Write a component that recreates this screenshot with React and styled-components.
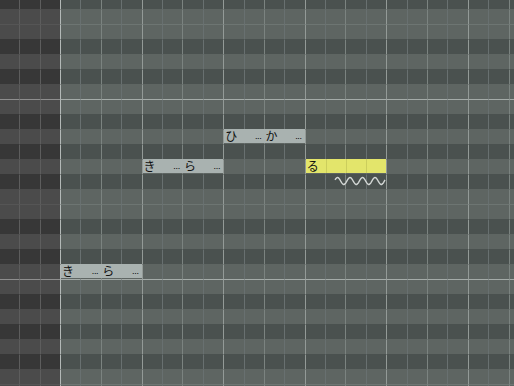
import React from 'react';
import styled, { createGlobalStyle } from 'styled-components';

// piano roll geometry
const COL = 20.4;   // one 16th column
const ROW = 15;     // one semitone row
const KEYS_W = 60;  // darkened area on the left
const TOP = -6;     // first row starts above the window
const ROW_COUNT = 27;
const COL_COUNT = 23;

const SCALE = ['F#', 'F', 'E', 'D#', 'D', 'C#', 'C', 'B', 'A#', 'A', 'G#', 'G'];

const GlobalStyle = createGlobalStyle`
  html, body {
    margin: 0;
    padding: 0;
    background: #4b5250;
    overflow: hidden;
  }
  #root {
    width: 514px;
    height: 386px;
  }
`;

const Roll = styled.div`
  position: relative;
  width: 514px;
  height: 386px;
  overflow: hidden;
`;

const Rows = styled.div`
  display: flex;
  flex-direction: column;
  margin-top: ${TOP}px;
  margin-left: ${KEYS_W - COL * 3}px;
`;

const Row = styled.div`
  display: flex;
  flex: none;
  height: ${ROW}px;
`;

const lineFor = (kind, area) => {
  if (kind === 'octave') return area === 'key' ? '#8e8e8e' : '#a4aba8';
  if (kind === 'half') return area === 'key' ? '#555555' : '#6d7572';
  return 'transparent';
};

const KeyCell = styled.div`
  flex: none;
  width: ${COL}px;
  box-sizing: border-box;
  background: ${p => (p.$dark ? '#373737' : '#4b4b4b')};
  border-left: 1px solid ${p => (p.$first ? 'transparent' : '#5d5d5d')};
  border-top: 1px solid ${p => lineFor(p.$line, 'key')};
`;

const beatColor = i => {
  if (i === 0) return '#b3b9b7';
  if (i % 4 === 0) return '#939a97';
  if (i % 2 === 0) return '#7b8380';
  return '#687070';
};

const GridCell = styled.div`
  flex: none;
  width: ${COL}px;
  box-sizing: border-box;
  background: ${p => (p.$dark ? '#4a514f' : '#5e6562')};
  border-left: 1px solid ${p => beatColor(p.$index)};
  border-top: 1px solid ${p => lineFor(p.$line, 'grid')};
`;

const Phrase = styled.div.attrs(p => ({
  style: {
    left: KEYS_W + p.$col * COL + 1,
    top: TOP + p.$row * ROW,
    width: p.$len * COL - 1,
  },
}))`
  position: absolute;
  height: 14px;
  display: flex;
  background: ${p => (p.$selected ? '#e3e56b' : '#a9b2b0')};
  ${p =>
    p.$selected &&
    `background-image: linear-gradient(to right,
      transparent 20px, #ccce5d 20px 21px,
      transparent 21px 40px, #ccce5d 40px 41px,
      transparent 41px 60px, #ccce5d 60px 61px, transparent 61px);`}
`;

const Syllable = styled.div`
  flex: ${p => p.$len} 0 0;
  display: flex;
  justify-content: space-between;
  align-items: center;
  padding: 0 3px 0 1px;
  min-width: 0;
`;

const Lyric = styled.span`
  font-family: "Noto Sans CJK JP", "DejaVu Sans", sans-serif;
  font-size: 12px;
  line-height: 14px;
  color: #111;
`;

const More = styled.span`
  align-self: flex-end;
  font-family: "Liberation Sans", sans-serif;
  font-size: 9px;
  letter-spacing: -0.3px;
  line-height: 8px;
  margin-bottom: 3px;
  color: #000;
`;

const Vibrato = styled.svg`
  position: absolute;
  left: 335px;
  top: 176px;
  overflow: visible;
`;

const phrases = [
  { row: 9, col: 8, notes: [{ text: 'ひ', len: 2, cut: true }, { text: 'か', len: 2, cut: true }] },
  { row: 11, col: 4, notes: [{ text: 'き', len: 2, cut: true }, { text: 'ら', len: 2, cut: true }] },
  { row: 11, col: 12, selected: true, vibrato: true, notes: [{ text: 'る', len: 4 }] },
  { row: 18, col: 0, notes: [{ text: 'き', len: 2, cut: true }, { text: 'ら', len: 2, cut: true }] },
];

const wavePath = () => {
  const pts = [];
  for (let x = 0; x <= 50; x += 0.5) {
    const y = 5 - 3.5 * Math.sin((x / 12.5) * Math.PI * 2 + 0.3);
    pts.push(`${x.toFixed(1)},${y.toFixed(2)}`);
  }
  return 'M' + pts.join(' L');
};

const App = () => {
  const rows = Array.from({ length: ROW_COUNT }, (_, r) => {
    const key = SCALE[r % 12];
    return {
      dark: key.includes('#'),
      line: key === 'B' ? 'octave' : key === 'E' ? 'half' : 'none',
    };
  });

  return (
    <>
      <GlobalStyle />
      <Roll>
        <Rows>
          {rows.map((row, r) => (
            <Row key={r}>
              {[0, 1, 2].map(k => (
                <KeyCell key={k} $first={k === 0} $dark={row.dark} $line={row.line} />
              ))}
              {Array.from({ length: COL_COUNT }, (_, i) => (
                <GridCell key={i} $index={i} $dark={row.dark} $line={row.line} />
              ))}
            </Row>
          ))}
        </Rows>

        {phrases.map((ph, i) => (
          <Phrase
            key={i}
            $row={ph.row}
            $col={ph.col}
            $len={ph.notes.reduce((s, n) => s + n.len, 0)}
            $selected={ph.selected}
          >
            {ph.notes.map((n, j) => (
              <Syllable key={j} $len={n.len}>
                <Lyric>{n.text}</Lyric>
                {n.cut && <More>...</More>}
              </Syllable>
            ))}
          </Phrase>
        ))}

        <Vibrato width="52" height="11" viewBox="0 0 52 11">
          <path d={wavePath()} fill="none" stroke="#d3d7d5" strokeWidth="1.4" />
        </Vibrato>
      </Roll>
    </>
  );
};

export default App;
